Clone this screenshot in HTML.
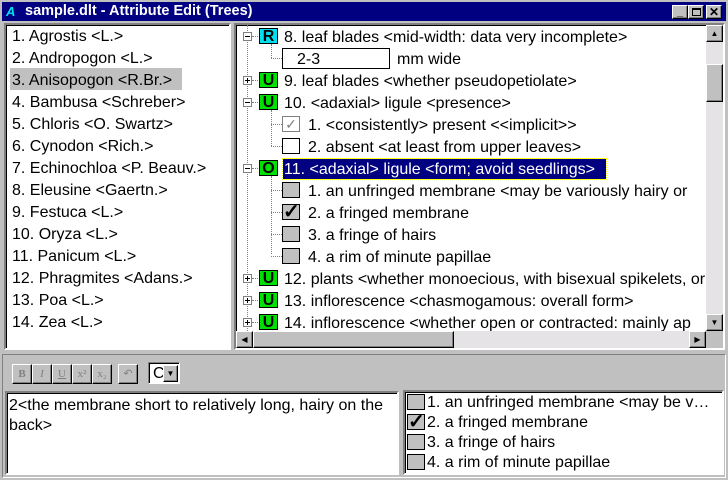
<!DOCTYPE html>
<html><head><style>
*{margin:0;padding:0;box-sizing:border-box}
body{width:728px;height:480px;background:#c0c0c0;font-family:"Liberation Sans",Arial,sans-serif;font-size:16px;position:relative;overflow:hidden;color:#000}
.a{position:absolute}
.sunk{border:2px solid;border-color:#808080 #fff #fff #808080;box-shadow:inset 1px 1px 0 #000}
.rais{background:#c0c0c0;border:1px solid;border-color:#fff #000 #000 #fff;box-shadow:inset -1px -1px 0 #808080}
.t{position:absolute;white-space:nowrap;line-height:22px;height:22px;padding-top:2px}
.exp{position:absolute;width:9px;height:9px;border:1px solid #808080;background:#fff}
.exp:before{content:"";position:absolute;left:1px;top:3px;width:5px;height:1px;background:#000}
.plus:after{content:"";position:absolute;left:3px;top:1px;width:1px;height:5px;background:#000}
.bd{position:absolute;width:19px;height:16px;border:1px solid #000;font-weight:bold;font-size:16px;text-align:center;line-height:15px}
.g{background:#00e000}.c{background:#00e0f0}
.cb{position:absolute;width:18px;height:16px;border:1px solid #000;background:#c0c0c0}
.dv{position:absolute;border-left:1px dotted #808080}
.dh{position:absolute;border-top:1px dotted #808080}
.tb{position:absolute;top:364px;width:20px;height:20px;font-size:11px;color:#808080;text-align:center;line-height:18px;font-family:"Liberation Serif",serif}
</style></head><body>
<div class="a" style="left:2px;top:2px;width:724px;height:19px;background:#000080"></div>
<div class="a" style="left:6px;top:4px;width:14px;height:15px;color:#00e0f0;font-weight:bold;font-size:13px;line-height:15px;font-style:italic">A</div>
<div class="a" style="left:25px;top:2px;color:#fff;font-weight:bold;font-size:14.5px;line-height:19px">sample.dlt - Attribute Edit (Trees)</div>
<div class="a rais" style="left:672px;top:5px;width:16px;height:14px;font-weight:bold;font-size:11px;text-align:center;line-height:12px">_</div>
<div class="a rais" style="left:688px;top:5px;width:16px;height:14px"><div class="a" style="left:3px;top:2px;width:9px;height:8px;border:1px solid #000;border-top-width:2px"></div></div>
<div class="a rais" style="left:706px;top:5px;width:16px;height:14px;font-weight:bold;font-size:12px;text-align:center;line-height:12px">✕</div>

<div class="a sunk" style="left:4px;top:23px;width:227px;height:327px;background:#fff"></div>
<div class="a" style="left:10px;top:68px;width:172px;height:22px;background:#c0c0c0"></div>
<div class="t" style="left:12px;top:24px">1. Agrostis &lt;L.&gt;</div>
<div class="t" style="left:12px;top:46px">2. Andropogon &lt;L.&gt;</div>
<div class="t" style="left:12px;top:68px">3. Anisopogon &lt;R.Br.&gt;</div>
<div class="t" style="left:12px;top:90px">4. Bambusa &lt;Schreber&gt;</div>
<div class="t" style="left:12px;top:112px">5. Chloris &lt;O. Swartz&gt;</div>
<div class="t" style="left:12px;top:134px">6. Cynodon &lt;Rich.&gt;</div>
<div class="t" style="left:12px;top:156px">7. Echinochloa &lt;P. Beauv.&gt;</div>
<div class="t" style="left:12px;top:178px">8. Eleusine &lt;Gaertn.&gt;</div>
<div class="t" style="left:12px;top:200px">9. Festuca &lt;L.&gt;</div>
<div class="t" style="left:12px;top:222px">10. Oryza &lt;L.&gt;</div>
<div class="t" style="left:12px;top:244px">11. Panicum &lt;L.&gt;</div>
<div class="t" style="left:12px;top:266px">12. Phragmites &lt;Adans.&gt;</div>
<div class="t" style="left:12px;top:288px">13. Poa &lt;L.&gt;</div>
<div class="t" style="left:12px;top:310px">14. Zea &lt;L.&gt;</div>

<div class="a sunk" style="left:234px;top:23px;width:491px;height:327px;background:#fff;overflow:hidden">
<div style="position:absolute;left:0;top:0;width:470px;height:306px;overflow:hidden">
<div class="dv" style="left:11px;top:0;height:306px"></div>
<div class="exp" style="left:7px;top:7px"></div><div class="dh" style="left:16px;top:11px;width:6px"></div>
<div class="bd c" style="left:23px;top:3px">R</div>
<div class="t" style="left:48px;top:0">8. leaf blades &lt;mid-width: data very incomplete&gt;</div>
<div class="dv" style="left:35px;top:19px;height:14px"></div><div class="dh" style="left:35px;top:33px;width:11px"></div>
<div class="a" style="left:46px;top:23px;width:108px;height:21px;border:1px solid #000;background:#fff;padding:1px 0 0 14px;line-height:19px">2-3</div>
<div class="t" style="left:161px;top:22px">mm wide</div>
<div class="exp plus" style="left:7px;top:51px"></div><div class="dh" style="left:16px;top:55px;width:6px"></div>
<div class="bd g" style="left:23px;top:47px">U</div>
<div class="t" style="left:48px;top:44px">9. leaf blades &lt;whether pseudopetiolate&gt;</div>
<div class="exp" style="left:7px;top:73px"></div><div class="dh" style="left:16px;top:77px;width:6px"></div>
<div class="bd g" style="left:23px;top:69px">U</div>
<div class="t" style="left:48px;top:66px">10. &lt;adaxial&gt; ligule &lt;presence&gt;</div>
<div class="dv" style="left:35px;top:85px;height:36px"></div>
<div class="dh" style="left:35px;top:99px;width:11px"></div><div class="dh" style="left:35px;top:121px;width:11px"></div>
<div class="cb" style="left:46px;top:91px;background:#fff;border-color:#808080;color:#808080;font-size:14px;line-height:14px;text-align:center">✓</div>
<div class="t" style="left:72px;top:88px">1. &lt;consistently&gt; present &lt;&lt;implicit&gt;&gt;</div>
<div class="cb" style="left:46px;top:113px;background:#fff"></div>
<div class="t" style="left:72px;top:110px">2. absent &lt;at least from upper leaves&gt;</div>
<div class="exp" style="left:7px;top:139px"></div><div class="dh" style="left:16px;top:143px;width:6px"></div>
<div class="bd g" style="left:23px;top:135px">O</div>
<div class="a" style="left:47px;top:134px;width:323px;height:20px;background:#000080;outline:1px dotted #ff0"></div>
<div class="t" style="left:48px;top:132px;color:#fff">11. &lt;adaxial&gt; ligule &lt;form; avoid seedlings&gt;</div>
<div class="dv" style="left:35px;top:151px;height:78px"></div>
<div class="dh" style="left:35px;top:165px;width:11px"></div><div class="dh" style="left:35px;top:187px;width:11px"></div><div class="dh" style="left:35px;top:209px;width:11px"></div><div class="dh" style="left:35px;top:231px;width:11px"></div>
<div class="cb" style="left:46px;top:157px"></div>
<div class="t" style="left:72px;top:154px">1. an unfringed membrane &lt;may be variously hairy or</div>
<div class="cb" style="left:46px;top:179px;font-size:20px;line-height:14px;font-weight:bold">✓</div>
<div class="t" style="left:72px;top:176px">2. a fringed membrane</div>
<div class="cb" style="left:46px;top:201px"></div>
<div class="t" style="left:72px;top:198px">3. a fringe of hairs</div>
<div class="cb" style="left:46px;top:223px"></div>
<div class="t" style="left:72px;top:220px">4. a rim of minute papillae</div>
<div class="exp plus" style="left:7px;top:249px"></div><div class="dh" style="left:16px;top:253px;width:6px"></div>
<div class="bd g" style="left:23px;top:245px">U</div>
<div class="t" style="left:48px;top:242px">12. plants &lt;whether monoecious, with bisexual spikelets, or</div>
<div class="exp plus" style="left:7px;top:271px"></div><div class="dh" style="left:16px;top:275px;width:6px"></div>
<div class="bd g" style="left:23px;top:267px">U</div>
<div class="t" style="left:48px;top:264px">13. inflorescence &lt;chasmogamous: overall form&gt;</div>
<div class="exp plus" style="left:7px;top:293px"></div><div class="dh" style="left:16px;top:297px;width:6px"></div>
<div class="bd g" style="left:23px;top:289px">U</div>
<div class="t" style="left:48px;top:286px">14. inflorescence &lt;whether open or contracted: mainly ap</div>
</div>
<div class="a" style="left:470px;top:0;width:17px;height:306px;background:#e6e3e6"></div>
<div class="a rais" style="left:470px;top:0;width:17px;height:17px;font-size:8px;text-align:center;line-height:15px">▲</div>
<div class="a rais" style="left:470px;top:39px;width:17px;height:38px"></div>
<div class="a rais" style="left:470px;top:289px;width:17px;height:17px;font-size:8px;text-align:center;line-height:15px">▼</div>
<div class="a" style="left:0;top:306px;width:470px;height:17px;background:#e6e3e6"></div>
<div class="a rais" style="left:0;top:306px;width:17px;height:17px;font-size:8px;text-align:center;line-height:15px">◀</div>
<div class="a rais" style="left:17px;top:306px;width:201px;height:17px"></div>
<div class="a rais" style="left:453px;top:306px;width:17px;height:17px;font-size:8px;text-align:center;line-height:15px">▶</div>
<div class="a" style="left:470px;top:306px;width:17px;height:17px;background:#c0c0c0"></div>
</div>

<div class="a" style="left:2px;top:354px;width:724px;height:124px;border:1px solid;border-color:#808080 #fff #fff #808080"></div>
<div class="tb rais" style="left:12px;font-weight:bold">B</div>
<div class="tb rais" style="left:32px;font-style:italic">I</div>
<div class="tb rais" style="left:52px;text-decoration:underline">U</div>
<div class="tb rais" style="left:72px">x²</div>
<div class="tb rais" style="left:92px">x₂</div>
<div class="tb rais" style="left:118px">↶</div>
<div class="a" style="left:148px;top:362px;width:32px;height:22px;border:1px solid;border-color:#808080 #fff #fff #808080;background:#fff;box-shadow:inset 1px 1px 0 #000;padding:2px 0 0 4px;line-height:18px">C</div>
<div class="a rais" style="left:163px;top:365px;width:15px;height:17px;font-size:8px;text-align:center;line-height:15px">▼</div>

<div class="a sunk" style="left:5px;top:391px;width:394px;height:84px;background:#fff;padding:3px 3px 0 2px;line-height:20px">2&lt;the membrane short to relatively long, hairy on the back&gt;</div>

<div class="a sunk" style="left:403px;top:390px;width:321px;height:85px;background:#fff">
<div class="cb" style="left:2px;top:2px"></div><div class="t" style="left:22px;top:-1px;line-height:20px">1. an unfringed membrane &lt;may be v…</div>
<div class="cb" style="left:2px;top:22px;font-size:20px;line-height:14px;font-weight:bold">✓</div><div class="t" style="left:22px;top:19px;line-height:20px">2. a fringed membrane</div>
<div class="cb" style="left:2px;top:42px"></div><div class="t" style="left:22px;top:39px;line-height:20px">3. a fringe of hairs</div>
<div class="cb" style="left:2px;top:62px"></div><div class="t" style="left:22px;top:59px;line-height:20px">4. a rim of minute papillae</div>
</div>
</body></html>
